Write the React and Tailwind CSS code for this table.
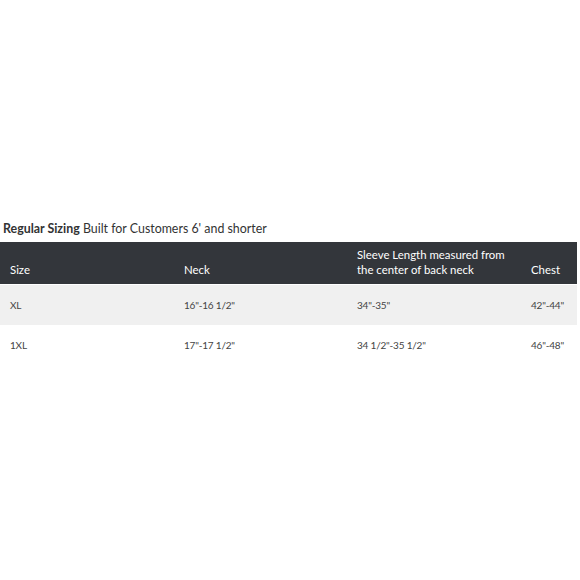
import React from 'react';

const rows = [
  { size: 'XL', neck: '16"-16 1/2"', sleeve: '34"-35"', chest: '42"-44"' },
  { size: '1XL', neck: '17"-17 1/2"', sleeve: '34 1/2"-35 1/2"', chest: '46"-48"' },
];

function App() {
  return (
    <div className="w-[580px] h-[580px] bg-white pt-[220px] font-['Lato',sans-serif] text-[#333]">
      <div className="pl-[3px] text-[12.4px] leading-[18px] text-[#333]">
        <span className="font-bold">Regular Sizing</span> Built for Customers 6' and shorter
      </div>

      <div className="mt-[4px] w-[577px]">
        <div className="grid grid-cols-[174px_173px_174px_1fr] bg-[#33363b] text-white text-[11.4px] leading-[15px] h-[42px] items-end pb-[7px]">
          <div className="pl-[10px]">Size</div>
          <div className="pl-[10px]">Neck</div>
          <div className="pl-[10px]">
            Sleeve Length measured from
            <br />
            the center of back neck
          </div>
          <div className="pl-[10px]">Chest</div>
        </div>

        {rows.map((row, i) => (
          <div
            key={i}
            className={
              'grid grid-cols-[174px_173px_174px_1fr] items-center text-[10px] tracking-[-0.2px] h-[40px] text-[#444] ' +
              (i % 2 === 0 ? 'bg-[#f0f0f0] mt-px' : 'bg-white')
            }
          >
            <div className="pl-[10px]">{row.size}</div>
            <div className="pl-[10px]">{row.neck}</div>
            <div className="pl-[10px]">{row.sleeve}</div>
            <div className="pl-[10px]">{row.chest}</div>
          </div>
        ))}
      </div>
    </div>
  );
}

export default App;
